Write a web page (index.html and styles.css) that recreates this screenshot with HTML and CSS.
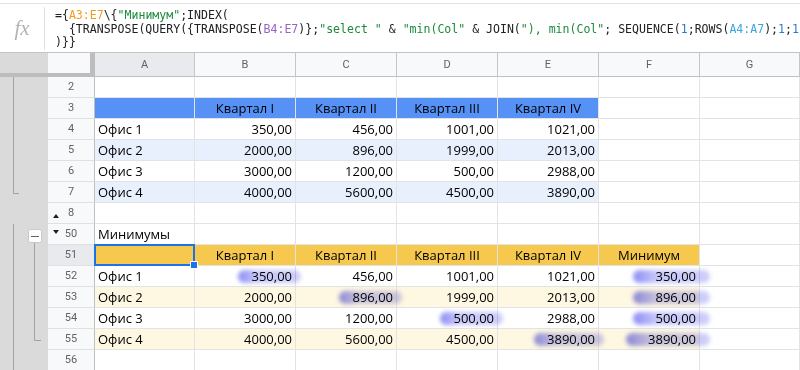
FILE: index.html
```html
<!DOCTYPE html>
<html lang="ru">
<head>
    <meta charset="UTF-8">
    <title>Минимумы</title>
    <link rel="stylesheet" href="styles.css">
</head>
<body>
    <div class="formula-bar">
        <div class="fx">fx</div>
        <div class="formula">
            <div class="line">={<span class="r-orange">A3:E7</span>\{<span class="str">"Минимум"</span>;INDEX(</div>
            <div class="line">  {TRANSPOSE(QUERY({TRANSPOSE(<span class="r-purple">B4:E7</span>)};<span class="str">"select "</span> &amp; <span class="str">"min(Col"</span> &amp; JOIN(<span class="str">"), min(Col"</span>; SEQUENCE(<span class="n">1</span>;ROWS(<span class="r-cyan">A4:A7</span>);<span class="n">1</span>;<span class="n">1</span>)));0))</div>
            <div class="line">)}}</div>
        </div>
    </div>

    <div class="sheet">
        <div class="gutter">
            <div class="gutter-head"></div>
            <svg class="gutter-lines" width="48" height="294" viewBox="0 0 48 294">
                <path d="M13.5 0 V116.5 H19" fill="none" stroke="#a3a3a3"/>
                <path d="M13.5 147 V294" fill="none" stroke="#a3a3a3"/>
                <rect x="28.5" y="152.5" width="13" height="13" rx="2" fill="#fff" stroke="#c8c8c8"/>
                <path d="M31 159.5 H39" stroke="#666" stroke-width="1"/>
                <path d="M34.5 166 V263.5 H41" fill="none" stroke="#a3a3a3"/>
            </svg>
        </div>

        <div class="grid">
            <div class="corner"></div>
            <div class="col-head active">A</div>
            <div class="col-head">B</div>
            <div class="col-head">C</div>
            <div class="col-head">D</div>
            <div class="col-head">E</div>
            <div class="col-head">F</div>
            <div class="col-head">G</div>

            <div class="row-head">2</div>
            <div class="cell"></div><div class="cell"></div><div class="cell"></div><div class="cell"></div><div class="cell"></div><div class="cell"></div><div class="cell"></div>

            <div class="row-head">3</div>
            <div class="cell blue-head"></div>
            <div class="cell blue-head center">Квартал I</div>
            <div class="cell blue-head center">Квартал II</div>
            <div class="cell blue-head center">Квартал III</div>
            <div class="cell blue-head center">Квартал IV</div>
            <div class="cell"></div><div class="cell"></div>

            <div class="row-head">4</div>
            <div class="cell">Офис 1</div>
            <div class="cell num">350,00</div>
            <div class="cell num">456,00</div>
            <div class="cell num">1001,00</div>
            <div class="cell num">1021,00</div>
            <div class="cell"></div><div class="cell"></div>

            <div class="row-head">5</div>
            <div class="cell blue-band">Офис 2</div>
            <div class="cell blue-band num">2000,00</div>
            <div class="cell blue-band num">896,00</div>
            <div class="cell blue-band num">1999,00</div>
            <div class="cell blue-band num">2013,00</div>
            <div class="cell"></div><div class="cell"></div>

            <div class="row-head">6</div>
            <div class="cell">Офис 3</div>
            <div class="cell num">3000,00</div>
            <div class="cell num">1200,00</div>
            <div class="cell num">500,00</div>
            <div class="cell num">2988,00</div>
            <div class="cell"></div><div class="cell"></div>

            <div class="row-head">7</div>
            <div class="cell blue-band">Офис 4</div>
            <div class="cell blue-band num">4000,00</div>
            <div class="cell blue-band num">5600,00</div>
            <div class="cell blue-band num">4500,00</div>
            <div class="cell blue-band num">3890,00</div>
            <div class="cell"></div><div class="cell"></div>

            <div class="row-head"><span class="tri-up"></span>8</div>
            <div class="cell"></div><div class="cell"></div><div class="cell"></div><div class="cell"></div><div class="cell"></div><div class="cell"></div><div class="cell"></div>

            <div class="row-head"><span class="tri-down"></span>50</div>
            <div class="cell">Минимумы</div>
            <div class="cell"></div><div class="cell"></div><div class="cell"></div><div class="cell"></div><div class="cell"></div><div class="cell"></div>

            <div class="row-head active">51</div>
            <div class="cell yellow-head selected"></div>
            <div class="cell yellow-head center">Квартал I</div>
            <div class="cell yellow-head center">Квартал II</div>
            <div class="cell yellow-head center">Квартал III</div>
            <div class="cell yellow-head center">Квартал IV</div>
            <div class="cell yellow-head center">Минимум</div>
            <div class="cell"></div>

            <div class="row-head">52</div>
            <div class="cell">Офис 1</div>
            <div class="cell num"><span class="hl">350,00</span></div>
            <div class="cell num">456,00</div>
            <div class="cell num">1001,00</div>
            <div class="cell num">1021,00</div>
            <div class="cell num"><span class="hl wide">350,00</span></div>
            <div class="cell"></div>

            <div class="row-head">53</div>
            <div class="cell yellow-band">Офис 2</div>
            <div class="cell yellow-band num">2000,00</div>
            <div class="cell yellow-band num"><span class="hl">896,00</span></div>
            <div class="cell yellow-band num">1999,00</div>
            <div class="cell yellow-band num">2013,00</div>
            <div class="cell yellow-band num"><span class="hl wide">896,00</span></div>
            <div class="cell"></div>

            <div class="row-head">54</div>
            <div class="cell">Офис 3</div>
            <div class="cell num">3000,00</div>
            <div class="cell num">1200,00</div>
            <div class="cell num"><span class="hl">500,00</span></div>
            <div class="cell num">2988,00</div>
            <div class="cell num"><span class="hl wide">500,00</span></div>
            <div class="cell"></div>

            <div class="row-head">55</div>
            <div class="cell yellow-band">Офис 4</div>
            <div class="cell yellow-band num">4000,00</div>
            <div class="cell yellow-band num">5600,00</div>
            <div class="cell yellow-band num">4500,00</div>
            <div class="cell yellow-band num"><span class="hl">3890,00</span></div>
            <div class="cell yellow-band num"><span class="hl wide">3890,00</span></div>
            <div class="cell"></div>

            <div class="row-head">56</div>
            <div class="cell"></div><div class="cell"></div><div class="cell"></div><div class="cell"></div><div class="cell"></div><div class="cell"></div><div class="cell"></div>
        </div>
    </div>
</body>
</html>
```

FILE: styles.css
```css
body {
    margin: 0;
    width: 800px;
    height: 370px;
    overflow: hidden;
    background: #fff;
    font-family: "Open Sans", sans-serif;
    color: #000;
}

/* formula bar */
.formula-bar {
    display: flex;
    height: 50px;
    margin-top: 3px;
    box-sizing: border-box;
    border-top: 1px solid #e3e3e3;
    border-bottom: 1px solid #c4c4c4;
}

.fx {
    flex: none;
    width: 45px;
    box-sizing: border-box;
    margin: 3px 0 2px;
    border-right: 1px solid #e0e0e0;
    display: flex;
    align-items: center;
    justify-content: center;
    color: #b3b3b3;
    font: italic 21px "Liberation Serif", serif;
}

.formula {
    flex: 1;
    min-width: 0;
    padding: 5px 0 0 10px;
    font: 11.55px/13.5px "DejaVu Sans Mono", monospace;
    color: #202124;
    overflow: hidden;
}

.line {
    white-space: pre;
}

.r-orange { color: #f29b1d; }
.r-purple { color: #9a63c4; }
.r-cyan { color: #3aa6de; }
.str { color: #1c8a3a; }
.n { color: #2a7ad6; }

/* sheet */
.sheet {
    display: flex;
}

.gutter {
    flex: none;
    width: 48px;
    background: #dadada;
}

.gutter-head {
    height: 20px;
    border-bottom: 4px solid #bdbdbd;
}

.gutter-lines {
    display: block;
}

.grid {
    display: grid;
    grid-template-columns: 47px 100px repeat(5, 101px) 100px;
    grid-template-rows: 24px;
    grid-auto-rows: 21px;
}

.corner {
    box-sizing: border-box;
    background: #f8f9fa;
    border-right: 5px solid #bdbdbd;
    border-bottom: 4px solid #bdbdbd;
}

.col-head {
    box-sizing: border-box;
    background: #f8f9fa;
    color: #5f6368;
    font: 11px/23px Roboto, sans-serif;
    text-align: center;
    border-right: 1px solid #c6c6c6;
    border-bottom: 1px solid #c0c0c0;
}

.row-head {
    position: relative;
    box-sizing: border-box;
    background: #f8f9fa;
    color: #5f6368;
    font: 11px/20px Roboto, sans-serif;
    text-align: center;
    border-right: 1px solid #c0c0c0;
    border-bottom: 1px solid #e0e0e0;
}

.col-head.active,
.row-head.active {
    background: #e8eaed;
}

.tri-up,
.tri-down {
    position: absolute;
    left: 5px;
    width: 0;
    height: 0;
    border-left: 3px solid transparent;
    border-right: 3px solid transparent;
}

.tri-up {
    top: 11px;
    border-bottom: 4px solid #202124;
}

.tri-down {
    top: 6px;
    border-top: 4px solid #202124;
}

.cell {
    position: relative;
    box-sizing: border-box;
    padding: 0 3px;
    font-size: 13px;
    line-height: 20px;
    white-space: nowrap;
    border-right: 1px solid #e2e3e3;
    border-bottom: 1px solid #e2e3e3;
}

.num { text-align: right; }
.center { text-align: center; }

.blue-head { background: #5691f6; }
.blue-band { background: #e8f0fe; }
.yellow-head { background: #f6c84d; }
.yellow-band { background: #fef7e1; }

.selected::after {
    content: "";
    position: absolute;
    left: -1px;
    top: -1px;
    right: -1px;
    bottom: -1px;
    border: 2px solid #1a73e8;
}

.selected::before {
    content: "";
    position: absolute;
    right: -4px;
    bottom: -4px;
    width: 6px;
    height: 6px;
    background: #1a73e8;
    border: 1px solid #fff;
    z-index: 2;
}

/* marker highlight over the minimum values */
.hl {
    position: relative;
}

.hl::after {
    content: "";
    position: absolute;
    left: -13px;
    right: -9px;
    top: 3px;
    bottom: 2px;
    border-radius: 7px;
    background: linear-gradient(90deg, rgba(90, 90, 240, 0.7) 0, rgba(120, 120, 240, 0.42) 30%, rgba(125, 125, 240, 0.38) 100%);
    filter: blur(2px);
    mix-blend-mode: multiply;
    z-index: 1;
}

.hl.wide::after {
    left: -22px;
    right: -14px;
}
```
